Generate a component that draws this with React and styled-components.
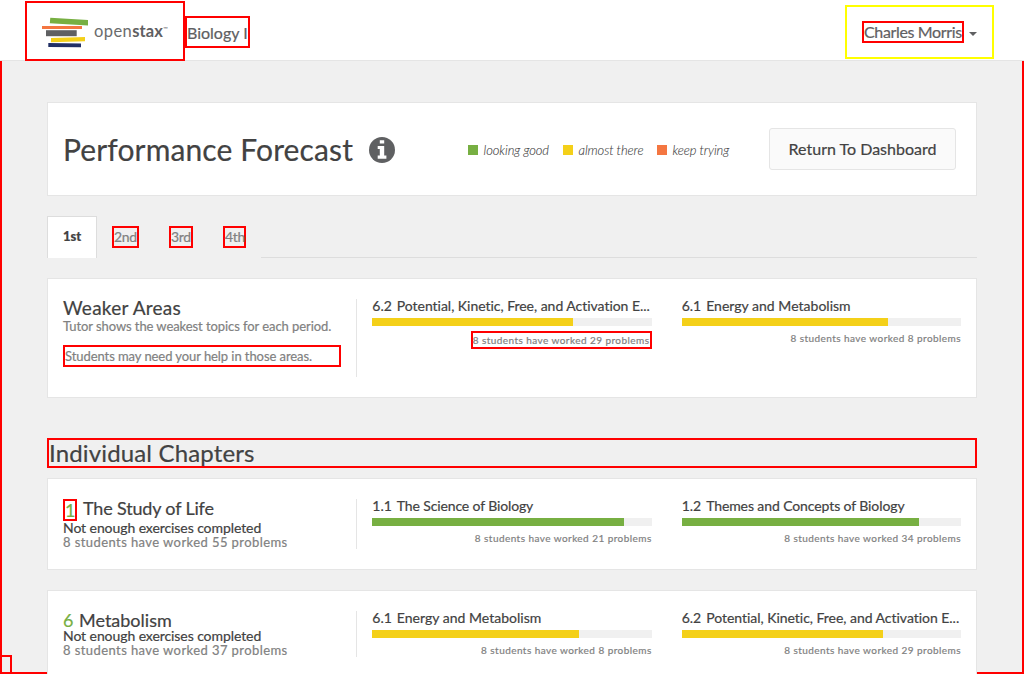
import React from "react";
import styled, { createGlobalStyle, css } from "styled-components";

const colors = {
  green: "#77af42",
  yellow: "#f4d019",
  orange: "#f47641",
  text: "#424242",
  muted: "#818181",
  line: "#e5e5e5",
  page: "#f0f0f0",
};

const GlobalStyle = createGlobalStyle`
  *, *::before, *::after { box-sizing: border-box; }
  body {
    margin: 0;
    background: ${colors.page};
    color: ${colors.text};
    font: 400 14px/18px Lato, "Liberation Sans", sans-serif;
    font-variant-ligatures: none;
    -webkit-text-stroke: 0.2px;
  }
  h1, h2, h3, p { margin: 0; font-weight: 400; }
`;

const outlined = css`
  border: 2px solid #ff0000;
`;

const Page = styled.div`
  position: relative;
  width: 1024px;
  height: 674px;
  overflow: hidden;
  display: flex;
  flex-direction: column;
`;

const Header = styled.header`
  flex: none;
  display: flex;
  align-items: flex-start;
  height: 61px;
  padding: 1px 30px 0 25px;
  background: #fff;
  border-bottom: 1px solid ${colors.line};
`;

const Brand = styled.a`
  ${outlined}
  flex: none;
  display: flex;
  width: 160px;
  height: 60px;
  padding: 13px 0 0 14px;
`;

const Wordmark = styled.span`
  display: flex;
  margin: 5px 0 0 5px;
  font-size: 16.5px;
  line-height: 21px;
  letter-spacing: 0.4px;
  color: #6b6c6d;
  -webkit-text-stroke: 0;
  b { font-weight: 700; color: #5f6062; letter-spacing: 0.1px; }
  small { font-size: 6px; line-height: 15px; letter-spacing: 0; }
`;

const CourseName = styled.a`
  ${outlined}
  width: 65px;
  height: 32px;
  margin-top: 15px;
  line-height: 29px;
  font-size: 16px;
  color: #5f6062;
  white-space: nowrap;
`;

const UserMenu = styled.div`
  display: flex;
  align-items: flex-start;
  width: 149px;
  height: 54px;
  margin: 4px 0 0 auto;
  padding: 14px 0 0 15px;
  border: 2px solid #ffff00;
  color: #5f6062;
`;

const UserName = styled.span`
  ${outlined}
  width: 102px;
  height: 22px;
  font-size: 16px;
  line-height: 17px;
  letter-spacing: -0.35px;
  white-space: nowrap;
`;

const Caret = styled.span`
  margin: 11px 0 0 5px;
  border: 4px solid transparent;
  border-top-color: #5f6062;
  border-bottom: 0;
`;

const Main = styled.main`
  ${outlined}
  flex: none;
  border-top: 0;
  height: 613px;
`;

const Container = styled.div`
  width: 930px;
  margin: 0 auto;
  padding-top: 41px;
`;

const Card = styled.section`
  height: ${(p) => p.$height}px;
  margin-bottom: 20px;
  background: #fff;
  border: 1px solid ${colors.line};
`;

const TitleCard = styled(Card)`
  display: flex;
  align-items: center;
  padding: 0 20px 0 15px;
`;

const PageTitle = styled.h1`
  width: 291px;
  font-size: 30px;
  line-height: 36px;
  letter-spacing: 0.12px;
  white-space: nowrap;
`;

const InfoIcon = styled.svg`
  flex: none;
  width: 26px;
  height: 26px;
  margin: 2px 0 0 15px;
`;

const Legend = styled.div`
  display: flex;
  align-items: center;
  margin: 2px 0 0 73px;
`;

const LegendItem = styled.span`
  display: flex;
  align-items: center;
  width: ${(p) => p.$width}px;
  font-size: 13px;
  font-style: italic;
  font-weight: 300;
  letter-spacing: -0.08px;
  -webkit-text-stroke: 0.1px;
  white-space: nowrap;
  &::before {
    content: "";
    width: 10px;
    height: 10px;
    margin-right: 5.5px;
    background: ${(p) => p.$color};
  }
`;

const DashboardButton = styled.button`
  width: 187px;
  height: 42px;
  margin-left: auto;
  padding: 0;
  background: #fafafa;
  border: 1px solid ${colors.line};
  border-radius: 3px;
  color: ${colors.text};
  font: 400 16px/20px Lato, sans-serif;
`;

const Tabs = styled.nav`
  display: flex;
  align-items: flex-start;
  height: 42px;
  margin-bottom: 20px;
`;

const ActiveTab = styled.a`
  width: 50px;
  height: 42px;
  background: #fff;
  border: 1px solid #dddddd;
  border-bottom: 0;
  font-size: 13px;
  font-weight: 900;
  line-height: 38px;
  text-align: center;
`;

const Tab = styled.a`
  ${outlined}
  width: ${(p) => p.$width}px;
  height: 22px;
  margin: 10px 15px 0;
  line-height: 18px;
  letter-spacing: -0.3px;
  color: ${colors.muted};
  white-space: nowrap;
`;

const TabLine = styled.div`
  flex: 1;
  align-self: flex-end;
  border-bottom: 1px solid #dddddd;
`;

const SectionTitle = styled.h2`
  ${outlined}
  height: 30px;
  margin: 40px 0 10px;
  font-size: 24px;
  line-height: 25px;
  letter-spacing: 0.15px;
`;

const Columns = styled.div`
  display: grid;
  grid-template-columns: repeat(3, 1fr);
  padding-top: 20px;
`;

const Summary = styled.div`
  height: ${(p) => p.$height}px;
  padding: 0 15px;
  border-right: 1px solid ${colors.line};
  white-space: nowrap;
`;

const SummaryTitle = styled.h3`
  display: flex;
  height: ${(p) => p.$height}px;
  font-size: ${(p) => p.$size || 18}px;
  line-height: 18px;
  letter-spacing: ${(p) => p.$tracking || 0}px;
`;

const Number = styled.span`
  width: 16px;
  color: ${colors.green};
`;

const BoxedNumber = styled.span`
  ${outlined}
  width: 14px;
  height: 22px;
  margin-right: 6px;
  line-height: 19px;
  color: ${colors.green};
`;

const Note = styled.p`
  line-height: 19px;
  font-size: 13px;
  letter-spacing: -0.07px;
  color: ${colors.muted};
`;

const BoxedNote = styled(Note)`
  ${outlined}
  width: 278px;
  height: 22px;
  margin-top: 9px;
  line-height: 18px;
`;

const Status = styled.p`
  font-size: 14px;
  line-height: 14px;
  letter-spacing: -0.08px;
`;

const Worked = styled.p`
  font-size: 13px;
  line-height: 14px;
  letter-spacing: 0.42px;
  color: ${colors.muted};
`;

const Topic = styled.div`
  display: flex;
  flex-direction: column;
  padding: 0 15px;
  min-width: 0;
`;

const TopicTitle = styled.div`
  display: flex;
  height: 19px;
  font-size: 14px;
  line-height: 14px;
  letter-spacing: ${(p) => p.$tracking}px;
  white-space: nowrap;
  span { width: 24.5px; flex: none; letter-spacing: 0; }
`;

const Bar = styled.div`
  height: 8px;
  background: ${colors.page};
`;

const Fill = styled.div`
  height: 8px;
  background: ${(p) => p.$color};
`;

const Count = styled.div`
  align-self: flex-end;
  margin-top: 5px;
  font-size: 10px;
  line-height: 14px;
  letter-spacing: 0.44px;
  color: ${colors.muted};
  white-space: nowrap;
  ${(p) =>
    p.$boxed &&
    css`
      ${outlined}
      width: 181px;
      height: 18px;
    `}
`;

const CornerBox = styled.div`
  ${outlined}
  position: absolute;
  left: 0;
  bottom: 0;
  width: 12px;
  height: 19px;
  border-bottom: 0;
`;

const Stack = () => (
  <svg width="48" height="32" viewBox="41 16 48 32">
    <path fill="#77af42" d="M50.3 17.8 88 20v5.5l-38.2-2.2z" />
    <path fill="#f47641" d="M42 26h40v3H42z" />
    <path fill="#5f6062" d="M46 30.2h30.7v6H46z" />
    <path fill="#f4d019" d="m51 38 34-1v4.3l-34 .9z" />
    <path fill="#212f65" d="m48.3 43 32.7.4v3.8l-32.7-.3z" />
  </svg>
);

const TopicBar = ({ number, title, tracking, color, value, worked, boxed }) => (
  <Topic>
    <TopicTitle $tracking={tracking}>
      <span>{number}</span>
      {title}
    </TopicTitle>
    <Bar>
      <Fill $color={color} style={{ width: `${value}%` }} />
    </Bar>
    <Count $boxed={boxed}>8 students have worked {worked} problems</Count>
  </Topic>
);

export default function App() {
  return (
    <Page>
      <GlobalStyle />
      <Header>
        <Brand>
          <Stack />
          <Wordmark>
            open<b>stax</b>
            <small>™</small>
          </Wordmark>
        </Brand>
        <CourseName>Biology I</CourseName>
        <UserMenu>
          <UserName>Charles Morris</UserName>
          <Caret />
        </UserMenu>
      </Header>
      <Main>
        <Container>
          <TitleCard $height={94}>
            <PageTitle>Performance Forecast</PageTitle>
            <InfoIcon viewBox="0 0 26 26">
              <circle cx="13" cy="13" r="13" fill="#5f6062" />
              <path fill="#fff" d="M10.8 3.2h4.4v3.4h-4.4zM8.7 9h6.5v9.6h2.2v3.1H8.7v-3.1h2.1v-6.5H8.7z" />
            </InfoIcon>
            <Legend>
              <LegendItem $width={95} $color={colors.green}>looking good</LegendItem>
              <LegendItem $width={94} $color={colors.yellow}>almost there</LegendItem>
              <LegendItem $width={80} $color={colors.orange}>keep trying</LegendItem>
            </Legend>
            <DashboardButton>Return To Dashboard</DashboardButton>
          </TitleCard>
          <Tabs>
            <ActiveTab>1st</ActiveTab>
            <Tab $width={27}>2nd</Tab>
            <Tab $width={24}>3rd</Tab>
            <Tab $width={23}>4th</Tab>
            <TabLine />
          </Tabs>
          <Card $height={120}>
            <Columns>
              <Summary $height={78}>
                <SummaryTitle $height={18} $size={19} $tracking={0.25}>Weaker Areas</SummaryTitle>
                <Note>Tutor shows the weakest topics for each period.</Note>
                <BoxedNote>Students may need your help in those areas.</BoxedNote>
              </Summary>
              <TopicBar number="6.2" title="Potential, Kinetic, Free, and Activation E..." tracking={-0.03} color={colors.yellow} value={72} worked={29} boxed />
              <TopicBar number="6.1" title="Energy and Metabolism" tracking={0.02} color={colors.yellow} value={74} worked={8} />
            </Columns>
          </Card>
          <SectionTitle>Individual Chapters</SectionTitle>
          <Card $height={92}>
            <Columns>
              <Summary $height={50}>
                <SummaryTitle $height={22} $tracking={-0.17}>
                  <BoxedNumber>1</BoxedNumber>
                  The Study of Life
                </SummaryTitle>
                <Status>Not enough exercises completed</Status>
                <Worked>8 students have worked 55 problems</Worked>
              </Summary>
              <TopicBar number="1.1" title="The Science of Biology" tracking={-0.13} color={colors.green} value={90} worked={21} />
              <TopicBar number="1.2" title="Themes and Concepts of Biology" tracking={-0.1} color={colors.green} value={85} worked={34} />
            </Columns>
          </Card>
          <Card $height={92}>
            <Columns>
              <Summary $height={46}>
                <SummaryTitle $height={18}>
                  <Number>6</Number>
                  Metabolism
                </SummaryTitle>
                <Status>Not enough exercises completed</Status>
                <Worked>8 students have worked 37 problems</Worked>
              </Summary>
              <TopicBar number="6.1" title="Energy and Metabolism" tracking={0.02} color={colors.yellow} value={74} worked={8} />
              <TopicBar number="6.2" title="Potential, Kinetic, Free, and Activation E..." tracking={-0.03} color={colors.yellow} value={72} worked={29} />
            </Columns>
          </Card>
        </Container>
      </Main>
      <CornerBox />
    </Page>
  );
}
